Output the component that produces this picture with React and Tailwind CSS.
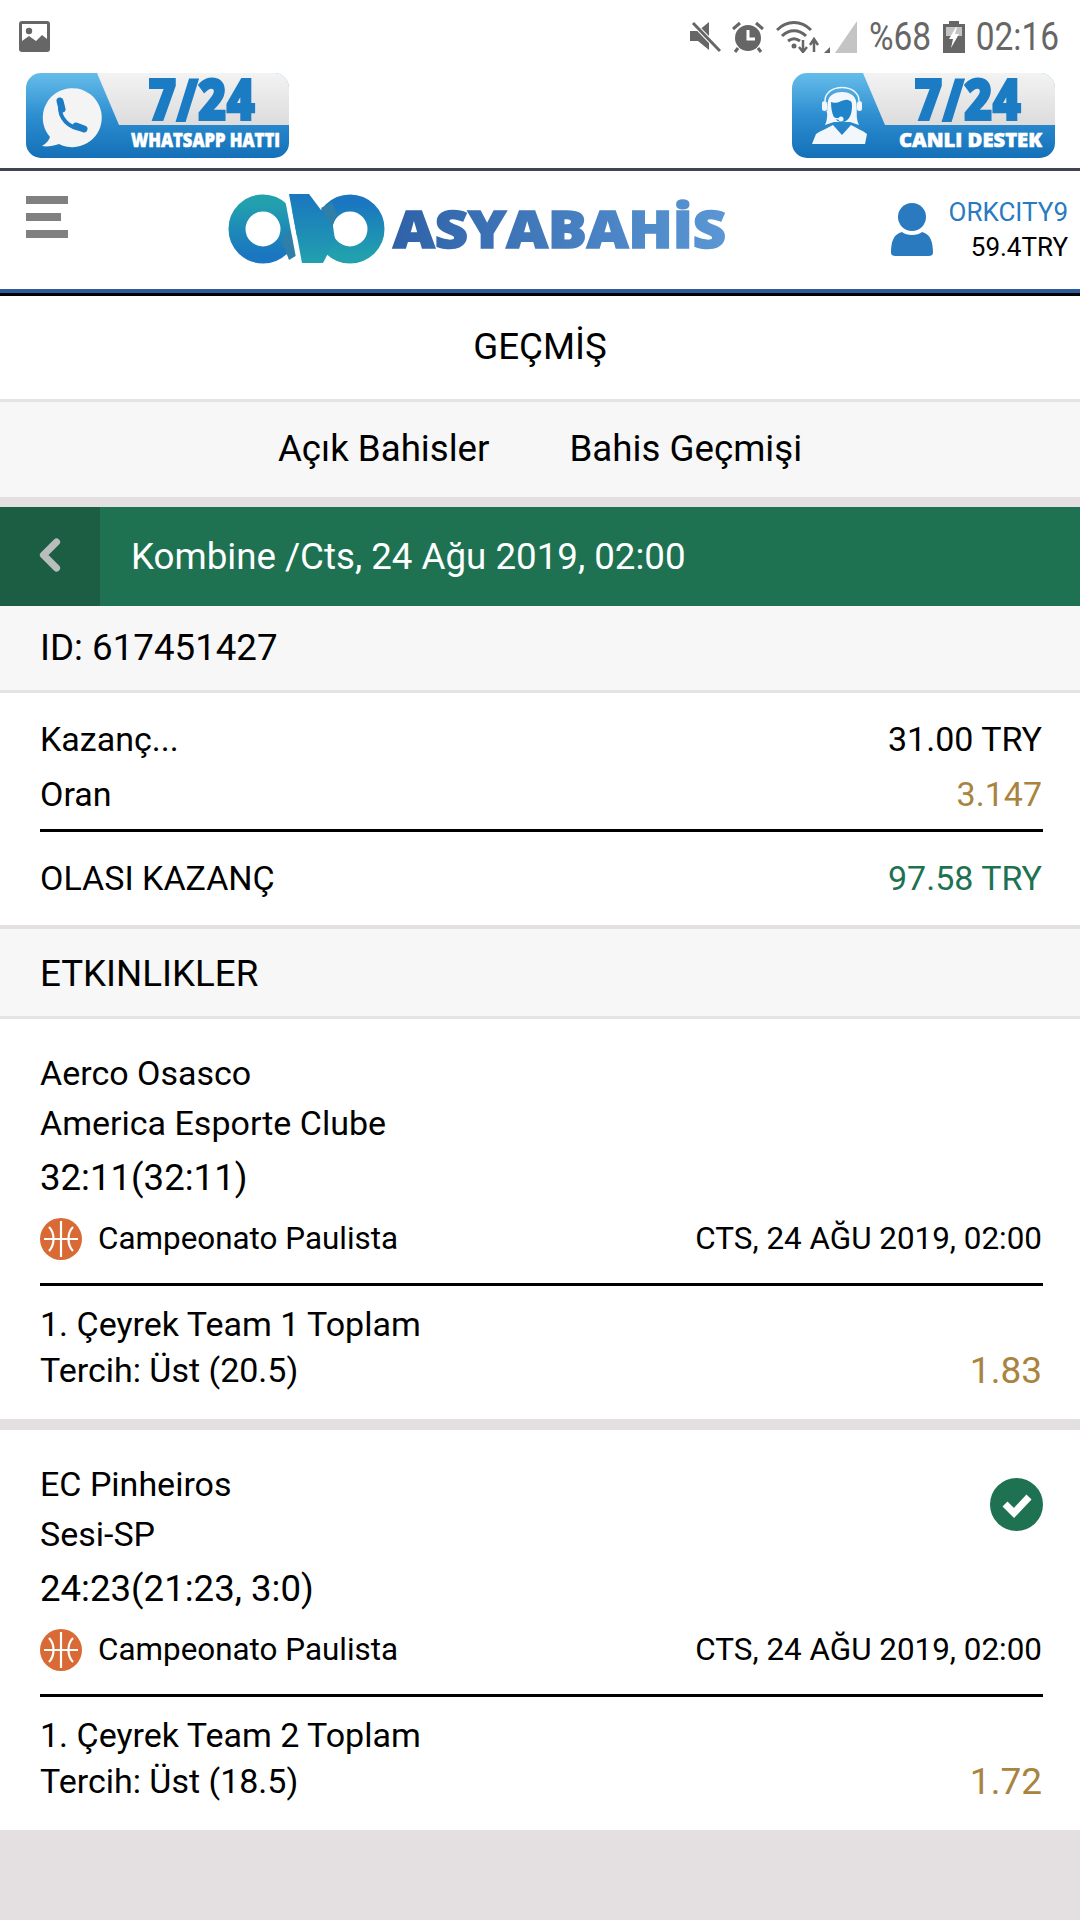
import { ChevronLeft } from "lucide-react";

const matches = [
  {
    home: "Aerco Osasco",
    away: "America Esporte Clube",
    score: "32:11(32:11)",
    market: "1. Çeyrek Team 1 Toplam",
    pick: "Tercih: Üst (20.5)",
    odd: "1.83",
    won: false,
  },
  {
    home: "EC Pinheiros",
    away: "Sesi-SP",
    score: "24:23(21:23, 3:0)",
    market: "1. Çeyrek Team 2 Toplam",
    pick: "Tercih: Üst (18.5)",
    odd: "1.72",
    won: true,
  },
];

function StatusBar() {
  return (
    <div className="h-[73px] flex items-center justify-between pl-[19px] pr-[21px] text-[#666666]">
      <svg width="31" height="31" viewBox="0 0 31 31">
        <rect width="31" height="31" rx="3" fill="#666666" />
        <rect x="3" y="3" width="25" height="25" fill="#ffffff" />
        <circle cx="10" cy="10" r="3.2" fill="#666666" />
        <path d="M3 28V20L10 15L17 20L23 14L28 18V28Z" fill="#666666" />
      </svg>
      <div className="flex items-center">
        <svg width="31" height="32" viewBox="0 0 31 32">
          <path d="M0 10H8L19 1V29L8 20H0Z" fill="#666666" />
          <path d="M2 1L30 30" stroke="#ffffff" strokeWidth="5" />
          <path d="M3 2L30 30" stroke="#666666" strokeWidth="3" />
        </svg>
        <svg className="ml-[11px]" width="32" height="32" viewBox="0 0 32 32">
          <circle cx="16" cy="17" r="13" fill="#666666" />
          <path d="M16 9V18H23" stroke="#ffffff" strokeWidth="3" fill="none" />
          <path d="M1 8L8 2M31 8L24 2M6 27L3 31M26 27L29 31" stroke="#666666" strokeWidth="3" />
        </svg>
        <svg className="ml-[12px]" width="45" height="33" viewBox="0 0 45 33">
          <path d="M1 10C11 0 25 0 35 10" stroke="#666666" strokeWidth="3" fill="none" />
          <path d="M6 16C13 9 23 9 30 16" stroke="#666666" strokeWidth="3" fill="none" />
          <path d="M12 21C16 18 20 18 24 21" stroke="#666666" strokeWidth="3" fill="none" />
          <circle cx="18" cy="26" r="2.5" fill="#666666" />
          <path d="M27 20V31M23 27L27 32L31 27M38 32V20M34 25L38 19L42 25" stroke="#666666" strokeWidth="2.5" fill="none" />
        </svg>
        <svg className="ml-[3px]" width="33" height="33" viewBox="0 0 33 33">
          <path d="M33 1V33H11Z" fill="#c4c4c4" />
          <path d="M0 33L6 27V33Z" fill="#666666" />
        </svg>
        <div className="ml-[14px] w-[60px] flex justify-end text-[38px] leading-none whitespace-nowrap scale-x-[0.88] origin-right">%68</div>
        <svg className="ml-[12px]" width="22" height="32" viewBox="0 0 22 32">
          <path d="M6 0H16V3H22V32H0V3H6Z" fill="#666666" />
          <rect x="3" y="6" width="16" height="9" fill="#c4c4c4" />
          <path d="M13 6L6 18H10L8 27L16 13H12L14 6Z" fill="#ffffff" />
        </svg>
        <div className="ml-[12px] w-[82px] flex justify-end text-[38px] leading-none whitespace-nowrap scale-x-[0.88] origin-right">02:16</div>
      </div>
    </div>
  );
}

function Banner({ id, label, labelX, labelW, children }) {
  return (
    <svg className="overflow-visible" width="263" height="85" viewBox="0 0 263 85">
      <defs>
        <linearGradient id={id + "b"} x1="0" y1="0" x2="0" y2="1">
          <stop offset="0" stopColor="#66bdea" />
          <stop offset="0.5" stopColor="#2d8ed0" />
          <stop offset="1" stopColor="#1470b8" />
        </linearGradient>
        <linearGradient id={id + "g"} x1="0" y1="0" x2="0" y2="1">
          <stop offset="0" stopColor="#f3f3f3" />
          <stop offset="1" stopColor="#dcdcdc" />
        </linearGradient>
        <clipPath id={id + "c"}>
          <rect width="263" height="85" rx="15" />
        </clipPath>
      </defs>
      <g clipPath={`url(#${id}c)`}>
        <rect width="263" height="85" fill={`url(#${id}b)`} />
        <path d="M71 0H263V52H93Z" fill={`url(#${id}g)`} />
      </g>
      <text x="122" y="47" fontFamily="Open Sans" fontWeight="800" fontSize="56" fill="#1b7cc4" stroke="#1b7cc4" strokeWidth="2" textLength="107" lengthAdjust="spacingAndGlyphs">
        7/24
      </text>
      <text x={labelX} y="74" fontFamily="Open Sans" fontWeight="800" fontSize="20" fill="#ffffff" stroke="#ffffff" strokeWidth="0.6" textLength={labelW} lengthAdjust="spacingAndGlyphs">
        {label}
      </text>
      {children}
    </svg>
  );
}

function Banners() {
  return (
    <div className="h-[95px] flex justify-between pl-[26px] pr-[25px]">
      <Banner id="wa" label="WHATSAPP HATTI" labelX={105} labelW={149}>
        <path d="M16 73C21 70 23 67 24 64A29.5 29.5 0 1 1 33 71C27 73 21 74 16 73Z" fill="#f4f4f4" />
        <path d="M34 32C33 46 43 55 56 56" stroke="#1b7cc4" strokeWidth="4" fill="none" />
        <path d="M34 28L36 36M50 53L58 56" stroke="#1b7cc4" strokeWidth="7" strokeLinecap="round" fill="none" />
      </Banner>
      <Banner id="cd" label="CANLI DESTEK" labelX={107} labelW={143}>
        <path d="M20 71L24 61C30 57 36 55 41 52L50 62L59 52C64 55 70 57 75 61L73 71Z" fill="#f2f7fb" />
        <path d="M33 52C37 44 34 36 36 28C38 16 62 16 64 28C66 36 63 44 67 52L58 49H42Z" fill="#f2f7fb" />
        <path d="M39 29C45 32 52 25 56 27C60 28 60 30 60 33C60 43 56 49 50 49C43 49 39 42 39 29Z" fill="#1f84c9" />
        <path d="M33 28C33 10 67 10 67 28" stroke="#f2f7fb" strokeWidth="1.5" fill="none" />
        <rect x="30" y="28" width="5" height="10" rx="2.5" fill="#f2f7fb" />
        <rect x="65" y="28" width="5" height="10" rx="2.5" fill="#f2f7fb" />
        <path d="M35 38C37 44 42 46 47 46" stroke="#f2f7fb" strokeWidth="1.5" fill="none" />
        <circle cx="49" cy="46" r="2.5" fill="#f2f7fb" />
      </Banner>
    </div>
  );
}

function Logo() {
  return (
    <svg className="overflow-visible" width="497" height="70" viewBox="0 0 497 70">
      <defs>
        <linearGradient id="ringA" x1="0" y1="0" x2="0" y2="1">
          <stop offset="0" stopColor="#22a0ae" />
          <stop offset="1" stopColor="#1a76c0" />
        </linearGradient>
        <linearGradient id="ringB" x1="0" y1="0" x2="0" y2="1">
          <stop offset="0" stopColor="#1a76c0" />
          <stop offset="1" stopColor="#22a0ae" />
        </linearGradient>
        <linearGradient id="logoText" x1="0" y1="0" x2="1" y2="0">
          <stop offset="0" stopColor="#2f62a8" />
          <stop offset="1" stopColor="#5a97d4" />
        </linearGradient>
      </defs>
      <circle cx="34" cy="35" r="26" fill="none" stroke="url(#ringA)" strokeWidth="17" />
      <path d="M52 45L60 37L70 60L60 66Z" fill="#2f7fa8" />
      <circle cx="121" cy="35" r="26" fill="none" stroke="url(#ringB)" strokeWidth="17" />
      <path d="M55 0H60L73 69H68Z" fill="#ffffff" />
      <path d="M60 0H80L104 32L106 46L94 69H73Z" fill="url(#ringB)" />
      <path d="M92 14L103 8L108 20L103 33Z" fill="#2f7fa8" />
      <text x="164" y="54" fontFamily="Open Sans" fontWeight="800" fontSize="52" fill="url(#logoText)" stroke="url(#logoText)" strokeWidth="1.6" textLength="333" lengthAdjust="spacingAndGlyphs">
        ASYABAHİS
      </text>
    </svg>
  );
}

function Header() {
  return (
    <div className="border-t-[3px] border-[#3f4450]">
      <div className="h-[118px] flex items-start pl-[26px] pr-[12px]">
        <div className="w-[42px] mt-[25px] flex flex-col gap-[9px]">
          <div className="h-[8px] w-[42px] bg-[#808080]"></div>
          <div className="h-[8px] w-[35px] bg-[#808080]"></div>
          <div className="h-[8px] w-[42px] bg-[#808080]"></div>
        </div>
        <div className="ml-[161px] mt-[23px]">
          <Logo />
        </div>
        <div className="ml-auto flex gap-[16px]">
          <svg className="mt-[32px]" width="42" height="53" viewBox="0 0 42 53">
            <circle cx="21" cy="14" r="14" fill="#2a7abf" />
            <path d="M0 50C0 38 3 31 11 29C15 33 27 33 31 29C39 31 42 38 42 50C42 52 40 53 38 53H4C2 53 0 52 0 50Z" fill="#2a7abf" />
          </svg>
          <div className="pt-[24px] text-right text-[26px] leading-[35px]">
            <div className="text-[#2a7abf]">ORKCITY9</div>
            <div className="text-black">59.4TRY</div>
          </div>
        </div>
      </div>
      <div className="h-[4px] bg-[#2d5a9c]"></div>
      <div className="h-[3px] bg-black"></div>
    </div>
  );
}

function BasketballIcon() {
  return (
    <svg width="42" height="42" viewBox="0 0 42 42">
      <circle cx="21" cy="21" r="21" fill="#d96a35" />
      <path d="M21 3V39M4 21H38M9 9C15 15 15 27 9 33M33 9C27 15 27 27 33 33" stroke="#ffffff" strokeWidth="2.2" fill="none" />
    </svg>
  );
}

function MatchCard({ match }) {
  return (
    <div className="bg-white pl-10 pr-[38px] pt-[29px] pb-[27px] text-black">
      <div className="flex justify-between items-start">
        <div className="text-[34px]">
          <div className="h-[50px] flex items-center">{match.home}</div>
          <div className="h-[50px] flex items-center">{match.away}</div>
        </div>
        {match.won && (
          <svg className="mt-[19px] -mr-[1px]" width="53" height="53" viewBox="0 0 53 53">
            <circle cx="26.5" cy="26.5" r="26.5" fill="#1e7252" />
            <path d="M15 26L24 35L39 19" stroke="#ffffff" strokeWidth="7" fill="none" />
          </svg>
        )}
      </div>
      <div className="h-[61px] flex items-center text-[36.6px]">{match.score}</div>
      <div className="h-[60px] flex items-center justify-between text-[31.4px]">
        <div className="flex items-center gap-4">
          <BasketballIcon />
          <span>Campeonato Paulista</span>
        </div>
        <span>CTS, 24 AĞU 2019, 02:00</span>
      </div>
      <div className="h-[3px] bg-black mt-[14px] mb-[13px] -mr-[1px]"></div>
      <div className="h-[50px] flex items-center text-[34px]">{match.market}</div>
      <div className="h-[43px] flex items-center justify-between text-[34px]">
        <span>{match.pick}</span>
        <span className="text-[37px] text-[#a8843f]">{match.odd}</span>
      </div>
    </div>
  );
}

export default function App() {
  return (
    <div className="w-[1080px] h-[1920px] overflow-hidden bg-[#e4e0e2] font-['Roboto',sans-serif]">
      <div className="bg-white">
        <StatusBar />
        <Banners />
        <Header />
        <div className="h-[106px] pb-[2px] flex items-center justify-center border-b-[3px] border-[#e4e4e4] text-[36.7px] text-black">
          GEÇMİŞ
        </div>
      </div>

      {/* TABS */}
      <div className="h-[95px] pb-[2px] bg-[#f7f7f7] flex items-center justify-center gap-[80px] text-[36.7px] text-black">
        <span>Açık Bahisler</span>
        <span>Bahis Geçmişi</span>
      </div>
      <div className="h-[10px]"></div>

      {/* TITLE BAR */}
      <div className="h-[99px] bg-[#1e7252] flex items-center text-white">
        <div className="w-[100px] h-full bg-[#1b5e44] flex items-center justify-center">
          <ChevronLeft size={52} strokeWidth={3.3} color="#b9bdbb" className="-mt-[4px]" />
        </div>
        <div className="pl-[31px] text-[36.7px]">Kombine /Cts, 24 Ağu 2019, 02:00</div>
      </div>

      <div className="h-[87px] bg-[#f7f7f7] flex items-center px-10 text-[36.7px] text-black border-b-[3px] border-[#e4e4e4]">
        ID: 617451427
      </div>

      {/* SUMMARY */}
      <div className="bg-white pl-10 pr-[38px] pt-[18px] text-[34px] text-black">
        <div className="h-[56px] flex items-center justify-between">
          <span>Kazanç...</span>
          <span>31.00 TRY</span>
        </div>
        <div className="h-[54px] flex items-center justify-between">
          <span>Oran</span>
          <span className="text-[#a8843f]">3.147</span>
        </div>
        <div className="h-[3px] bg-black mt-[8px] -mr-[1px]"></div>
        <div className="h-[93px] flex items-center justify-between">
          <span>OLASI KAZANÇ</span>
          <span className="text-[#1e7252]">97.58 TRY</span>
        </div>
      </div>
      <div className="h-[4px]"></div>
      <div className="h-[90px] pt-[2px] bg-[#f7f7f7] flex items-center px-10 text-[36.7px] text-black border-b-[3px] border-[#e4e4e4]">
        ETKINLIKLER
      </div>

      {/* EVENTS */}
      <div className="flex flex-col gap-[11px]">
        {matches.map((m) => (
          <MatchCard key={m.home} match={m} />
        ))}
      </div>
    </div>
  );
}
